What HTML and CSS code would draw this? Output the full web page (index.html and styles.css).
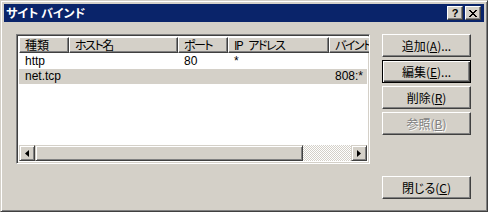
FILE: index.html
```html
<!DOCTYPE html>
<html lang="ja">
<head>
<meta charset="utf-8">
<title>サイト バインド</title>
<link rel="stylesheet" href="styles.css">
</head>
<body>
<div class="window">
  <div class="titlebar">
    <span class="title">サイト バインド</span>
    <div class="tb-buttons">
      <div class="tb help">?</div>
      <div class="tb close">
        <svg width="8" height="7" viewBox="0 0 8 7"><path d="M0 0h2v1h1v1h2V1h1V0h2v1H7v1H6v1H5v1h1v1h1v1h1v1H6V6H5V5H3v1H2v1H0V6h1V5h1V4h1V3H2V2H1V1H0z" fill="#000"/></svg>
      </div>
    </div>
  </div>
  <div class="body">
    <div class="listview">
      <div class="lv-header">
        <div class="hcell c1">種類</div>
        <div class="hcell c2 kana">ホスト名</div>
        <div class="hcell c3 kana">ポート</div>
        <div class="hcell c4 kana">IP アドレス</div>
        <div class="hcell c5 kana">バインド</div>
      </div>
      <div class="lv-row">
        <div class="cell c1">http</div>
        <div class="cell c2"></div>
        <div class="cell c3">80</div>
        <div class="cell c4">*</div>
        <div class="cell c5"></div>
      </div>
      <div class="lv-row selected">
        <div class="cell c1">net.tcp</div>
        <div class="cell c2"></div>
        <div class="cell c3"></div>
        <div class="cell c4"></div>
        <div class="cell c5">808:*</div>
      </div>
      <div class="lv-fill"></div>
      <div class="hscroll">
        <div class="sb-btn">
          <svg width="4" height="7" viewBox="0 0 4 7"><path d="M0 3.5L4 0v7z" fill="#000"/></svg>
        </div>
        <div class="sb-track">
          <div class="sb-thumb"></div>
        </div>
        <div class="sb-btn">
          <svg width="4" height="7" viewBox="0 0 4 7"><path d="M4 3.5L0 0v7z" fill="#000"/></svg>
        </div>
      </div>
    </div>
    <div class="buttons">
      <div class="btn">追加(<u>A</u>)...</div>
      <div class="btn default">編集(<u>E</u>)...</div>
      <div class="btn">削除(<u>R</u>)</div>
      <div class="btn disabled">参照(<u>B</u>)</div>
      <div class="btn bottom">閉じる(<u>C</u>)</div>
    </div>
  </div>
</div>
</body>
</html>
```
FILE: styles.css
```css
html, body {
  margin: 0;
  padding: 0;
  background: #d4d0c8;
}
body {
  font-family: "Liberation Sans", "Noto Sans CJK JP", sans-serif;
  font-size: 12px;
  color: #000;
  font-feature-settings: "palt";
}
.window {
  width: 488px;
  height: 212px;
  box-sizing: border-box;
  border: 1px solid;
  border-color: #d4d0c8 #404040 #404040 #d4d0c8;
  box-shadow: inset 1px 1px #fff, inset -1px -1px #808080;
  padding: 3px;
  display: flex;
  flex-direction: column;
  background: #d4d0c8;
}
.titlebar {
  height: 18px;
  background: #0a246a;
  display: flex;
  align-items: center;
  padding: 0 3px 0 2px;
  flex: none;
}
.title {
  color: #fff;
  font-weight: bold;
  font-size: 12px;
  line-height: 18px;
  flex: 1;
  font-family: "Noto Sans CJK JP", sans-serif;
  font-feature-settings: "palt";
}
.tb-buttons {
  display: flex;
  gap: 2px;
}
.tb {
  width: 16px;
  height: 14px;
  box-sizing: border-box;
  background: #d4d0c8;
  border: 1px solid;
  border-color: #fff #404040 #404040 #fff;
  box-shadow: inset -1px -1px #808080;
  display: flex;
  align-items: center;
  justify-content: center;
}
.help {
  font-family: "Liberation Sans", sans-serif;
  font-weight: bold;
  font-size: 11px;
  line-height: 12px;
}
.body {
  flex: 1;
  display: flex;
  gap: 12px;
  padding: 12px 13px 9px 12px;
}
.listview {
  width: 354px;
  height: 130px;
  box-sizing: border-box;
  border: 1px solid;
  border-color: #808080 #fff #fff #808080;
  box-shadow: inset 1px 1px #404040, inset -1px -1px #d4d0c8;
  padding: 2px;
  background: #fff;
  display: flex;
  flex-direction: column;
  overflow: hidden;
}
.lv-header, .lv-row {
  display: flex;
  flex: none;
  white-space: nowrap;
}
.c1 { width: 50px; }
.c2 { width: 109px; }
.c3 { width: 50px; }
.c4 { width: 101px; }
.c5 { width: 100px; }
.hcell, .cell { flex: none; overflow: hidden; }
.hcell {
  height: 16px;
  box-sizing: border-box;
  background: #d4d0c8;
  border: 1px solid;
  border-color: #fff #404040 #404040 #fff;
  box-shadow: inset -1px -1px #808080;
  padding-left: 5px;
  line-height: 13px;
  font-family: "Noto Sans CJK JP", sans-serif;
  font-feature-settings: "palt";
}
.hcell.kana { letter-spacing: -1.5px; word-spacing: 5px; }
.lv-row { height: 16px; line-height: 16px; }
.cell { padding-left: 6px; box-sizing: border-box; }
.lv-row.selected { background: #d4d0c8; height: 15px; line-height: 15px; }
.lv-fill { flex: 1; }
.hscroll {
  height: 16px;
  display: flex;
  flex: none;
}
.sb-btn {
  width: 16px;
  height: 16px;
  box-sizing: border-box;
  background: #d4d0c8;
  border: 1px solid;
  border-color: #d4d0c8 #404040 #404040 #d4d0c8;
  box-shadow: inset 1px 1px #fff, inset -1px -1px #808080;
  display: flex;
  align-items: center;
  justify-content: center;
  flex: none;
}
.sb-track {
  flex: 1;
  background-color: #d4d0c8;
  background-image: repeating-conic-gradient(#fff 0 25%, #d4d0c8 0 50%);
  background-size: 2px 2px;
  display: flex;
}
.sb-thumb {
  width: 268px;
  box-sizing: border-box;
  background: #d4d0c8;
  border: 1px solid;
  border-color: #d4d0c8 #404040 #404040 #d4d0c8;
  box-shadow: inset 1px 1px #fff, inset -1px -1px #808080;
}
.buttons {
  width: 89px;
  display: flex;
  flex-direction: column;
  gap: 3px;
}
.btn {
  height: 23px;
  box-sizing: border-box;
  background: #d4d0c8;
  border: 1px solid;
  border-color: #fff #404040 #404040 #fff;
  box-shadow: inset -1px -1px #808080;
  display: flex;
  align-items: center;
  justify-content: center;
  font-family: "Noto Sans CJK JP", sans-serif;
  font-size: 12px;
  flex: none;
}
.btn u { text-underline-offset: 1px; }
.btn.default {
  border: 1px solid #000;
  box-shadow: inset 1px 1px #fff, inset -1px -1px #404040, inset -2px -2px #808080;
}
.btn.disabled {
  color: #808080;
  text-shadow: 1px 1px #fff;
}
.btn.bottom { margin-top: auto; }
```
